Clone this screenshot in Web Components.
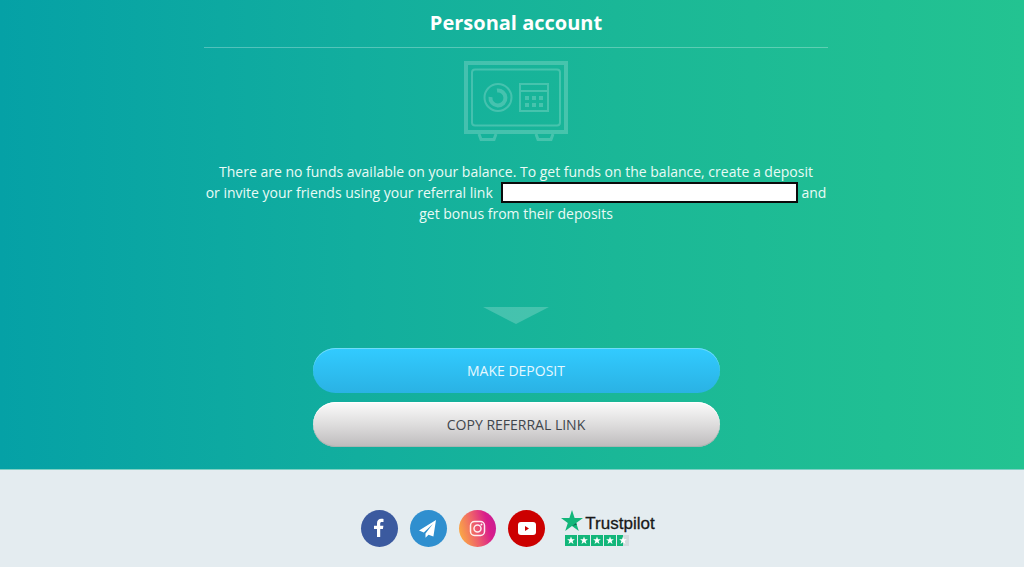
<!DOCTYPE html>
<html lang="en">
<head>
<meta charset="utf-8">
<meta name="viewport" content="width=device-width, initial-scale=1">
<title>Personal account</title>
<style>
  body {
    margin: 0;
    min-height: 100vh;
    display: flex;
    flex-direction: column;
    background: #e4ecf0;
    font-family: "Open Sans", "Noto Sans", sans-serif;
  }
</style>
</head>
<body>
  <account-panel heading="Personal account">
    <safe-icon slot="icon"></safe-icon>
    <referral-text></referral-text>
    <pill-button slot="actions" variant="primary">MAKE DEPOSIT</pill-button>
    <pill-button slot="actions">COPY REFERRAL LINK</pill-button>
  </account-panel>

  <page-footer>
    <social-link name="facebook" label="Facebook"></social-link>
    <social-link name="telegram" label="Telegram"></social-link>
    <social-link name="instagram" label="Instagram"></social-link>
    <social-link name="youtube" label="YouTube"></social-link>
    <trust-badge></trust-badge>
  </page-footer>

<script>
/* Base class: attaches the shadow root and renders styles + markup */
class BaseElement extends HTMLElement {
  constructor() {
    super();
    this.attachShadow({ mode: "open" });
  }

  connectedCallback() {
    this.render();
  }

  render() {
    this.shadowRoot.innerHTML = /*html*/ `
      <style>${this.constructor.styles}</style>
      ${this.markup()}
    `;
  }
}

class AccountPanel extends BaseElement {
  static get styles() {
    return /*css*/ `
      :host {
        display: block;
        padding: 8px 16px 22px 24px;
        background: linear-gradient(90deg, #05a1a6 0%, #12ae9e 35%, #1ab797 60%, #23c391 100%);
        border-bottom: 1px solid #7fd0c4;
      }

      section {
        max-width: 624px;
        margin: 0 auto;
        display: flex;
        flex-direction: column;
        align-items: center;
      }

      h1 {
        box-sizing: border-box;
        width: 100%;
        margin: 0;
        padding-bottom: 9px;
        border-bottom: 1px solid #ffffff48;
        color: #fff;
        font-size: 20px;
        line-height: 30px;
        text-align: center;
      }

      .icon {
        padding: 13px 0 20px;
      }

      .arrow {
        display: block;
        margin: 83px 0 24px;
      }

      .actions {
        width: 100%;
        max-width: 407px;
        display: flex;
        flex-direction: column;
        gap: 9px;
      }
    `;
  }

  markup() {
    return /*html*/ `
      <section>
        <h1>${this.getAttribute("heading")}</h1>
        <div class="icon"><slot name="icon"></slot></div>
        <slot></slot>
        <svg class="arrow" width="66" height="17" viewBox="0 0 66 17" aria-hidden="true">
          <path d="M0 0h66L33 17z" fill="#fff" fill-opacity=".2"/>
        </svg>
        <div class="actions"><slot name="actions"></slot></div>
      </section>
    `;
  }
}

class SafeIcon extends BaseElement {
  static get styles() {
    return /*css*/ `
      :host { display: block; }
      svg { display: block; }
    `;
  }

  markup() {
    return /*html*/ `
      <svg width="104" height="80" viewBox="0 0 104 80" fill="none" stroke="#fff" opacity=".2" aria-hidden="true">
        <path d="M2 2h100v69H2z" stroke-width="4"/>
        <rect x="8" y="8.500" width="88" height="56" rx="3" stroke-width="2"/>
        <circle cx="34" cy="36.500" r="13.500" stroke-width="2"/>
        <path d="M33 29.500a7.500 7.500 0 1 1-6.500 6.500" stroke-width="4"/>
        <path d="M56 23h28v27H56zM56 30h28" stroke-width="2"/>
        <g fill="#fff" stroke="none">
          <path d="M61 35h4v4h-4zM68 35h4v4h-4zM75 35h4v4h-4zM61 42h4v4h-4zM68 42h4v4h-4zM75 42h4v4h-4z"/>
        </g>
        <path d="M15 73l2 5.500h13l2-5.500M72 73l2 5.500h13l2-5.500" stroke-width="3"/>
      </svg>
    `;
  }
}

class ReferralText extends BaseElement {
  static get styles() {
    return /*css*/ `
      :host {
        display: block;
        color: #e9fbf6;
        font-size: 14px;
        line-height: 21px;
        text-align: center;
      }

      p { margin: 0; }

      input {
        box-sizing: border-box;
        width: 297px;
        max-width: 100%;
        height: 21px;
        margin: 0 0 0 8px;
        padding: 0 4px;
        border: 2px solid #0b0b0b;
        border-radius: 0;
        background: #fff;
        font: inherit;
        vertical-align: top;
      }
    `;
  }

  markup() {
    return /*html*/ `
      <p>
        There are no funds available on your balance. To get funds on the balance, create a deposit<br>
        or invite your friends using your referral link<input type="text" readonly aria-label="Referral link"> and<br>
        get bonus from their deposits
      </p>
    `;
  }
}

class PillButton extends BaseElement {
  static get styles() {
    return /*css*/ `
      :host { display: block; }

      button {
        display: block;
        width: 100%;
        height: 45px;
        padding: 0;
        border: 0;
        border-radius: 23px;
        background: linear-gradient(#fbfbfb, #dedddd 50%, #bdbbbc);
        box-shadow: inset 0 1px 0 #fff, inset 0 -1px 0 #aab3b0;
        color: #41464c;
        font-family: inherit;
        font-size: 14px;
        cursor: pointer;
      }

      :host([variant="primary"]) button {
        background: linear-gradient(#32cbff, #2ab2e4);
        box-shadow: inset 0 1px 0 #6fdcf8;
        color: #e6f8ff;
      }
    `;
  }

  markup() {
    return /*html*/ `<button type="button"><slot></slot></button>`;
  }
}

class PageFooter extends BaseElement {
  static get styles() {
    return /*css*/ `
      :host {
        display: flex;
        flex: 1;
        flex-wrap: wrap;
        align-items: flex-start;
        justify-content: center;
        gap: 12px;
        padding: 40px 24px 16px 16px;
      }
    `;
  }

  markup() {
    return /*html*/ `<slot></slot>`;
  }
}

const socialIcons = {
  facebook: {
    background: "#3b5a9f",
    icon: `<path fill="#fff" d="M16 27v-8H13v-3.300h3v-2.500c0-3 1.700-4.500 4.300-4.500 1 0 1.800.1 2.200.2v3h-1.600c-1.300 0-1.700.7-1.700 1.700v2.100h3.200l-.5 3.300h-2.700v8z"/>`,
  },
  telegram: {
    background: "#2f8fcf",
    icon: `<path fill="#fff" d="M26 10L9 20.500l4.800 2L22.800 14l-7.300 9.500v4.300l3-3.100 4.900 1.700z"/>`,
  },
  instagram: {
    background: "linear-gradient(75deg, #fbb040 5%, #ee5f6b 45%, #d91c8b 75%, #c11e95)",
    icon: `<g fill="none" stroke="#fff" stroke-opacity=".9" stroke-width="1.500"><rect x="11.500" y="11.500" width="14" height="14" rx="4"/><circle cx="18.500" cy="18.500" r="3.500"/></g><circle cx="22.500" cy="14.500" r="1" fill="#fff"/>`,
  },
  youtube: {
    background: "#cc0000",
    icon: `<rect x="10" y="12" width="18" height="13" rx="3" fill="#fff"/><path fill="#c00" d="M17 16v5l4-2.500z"/>`,
  },
};

class SocialLink extends BaseElement {
  static get styles() {
    return /*css*/ `
      :host { display: block; }

      a {
        display: block;
        width: 37px;
        height: 37px;
        border-radius: 50%;
      }

      svg { display: block; }
    `;
  }

  markup() {
    const { background, icon } = socialIcons[this.getAttribute("name")];
    return /*html*/ `
      <a href="#" aria-label="${this.getAttribute("label")}" style="background: ${background}">
        <svg width="37" height="37" viewBox="0 0 37 37" aria-hidden="true">${icon}</svg>
      </a>
    `;
  }
}

class TrustBadge extends BaseElement {
  static get styles() {
    return /*css*/ `
      :host {
        display: block;
        margin-left: 4px;
      }

      a {
        display: flex;
        flex-direction: column;
        gap: 3px;
        color: #191919;
        text-decoration: none;
      }

      .brand {
        display: flex;
        align-items: center;
        gap: 2px;
        height: 22px;
        font-family: "Liberation Sans", Arial, sans-serif;
        font-size: 17px;
        -webkit-text-stroke: 0.3px #191919;
      }

      .brand span { padding-top: 6px; }

      .stars { margin-left: 4px; }

      svg { display: block; }
    `;
  }

  markup() {
    const star = "M5.500 1.500l1 2.700h2.900L7.100 6l.9 2.900-2.500-1.700L3 8.900 3.900 6 1.600 4.200h2.900z";
    // the last square is only half filled
    const squares = [0, 13, 26, 39].map((x) => `<path fill="#12b67a" d="M${x} 0h12v11H${x}z"/>`).join("");
    const stars = [0, 13, 26, 39, 52].map((x) => `<path fill="#fff" transform="translate(${x + 0.5})" d="${star}"/>`).join("");

    return /*html*/ `
      <a href="#">
        <div class="brand">
          <svg width="22" height="22" viewBox="0 0 22 22" aria-hidden="true">
            <path fill="#12b67a" d="M11 0l2.600 8H22l-6.800 5 2.600 8L11 16.100 4.200 21l2.600-8L0 8h8.400z"/>
            <path fill="#0b6b50" d="M15.800 14.800l-.6-1.800L11 16.100z"/>
          </svg>
          <span>Trustpilot</span>
        </div>
        <svg class="stars" width="64" height="11" viewBox="0 0 64 11" aria-hidden="true">
          ${squares}
          <path fill="#12b67a" d="M52 0h6v11h-6z"/>
          <path fill="#d3dade" d="M58 0h6v11h-6z"/>
          ${stars}
        </svg>
      </a>
    `;
  }
}

customElements.define("account-panel", AccountPanel);
customElements.define("safe-icon", SafeIcon);
customElements.define("referral-text", ReferralText);
customElements.define("pill-button", PillButton);
customElements.define("page-footer", PageFooter);
customElements.define("social-link", SocialLink);
customElements.define("trust-badge", TrustBadge);
</script>
</body>
</html>
